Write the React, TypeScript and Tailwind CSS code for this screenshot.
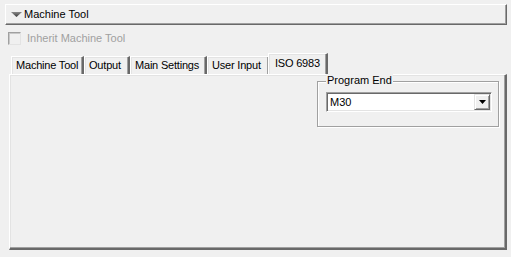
import React from "react";

function Tab({ label, selected, widthClass }: { label: string; selected?: boolean; widthClass: string }) {
  if (selected) {
    return (
      <div
        className={`relative z-10 -mx-[2px] h-[21px] shrink-0 self-end whitespace-nowrap border-l border-t border-white border-r-2 border-r-[#696969] bg-[#f0f0f0] pl-[6px] pt-[3px] text-[11px] leading-[13px] tracking-[-0.2px] text-black shadow-[inset_-1px_0_#a0a0a0,inset_1px_1px_#e3e3e3] ${widthClass}`}
      >
        {label}
      </div>
    );
  }
  return (
    <div
      className={`h-[18px] shrink-0 self-end whitespace-nowrap border-l border-t border-white border-r-2 border-r-[#696969] bg-[#f0f0f0] pl-[4px] pt-[2px] text-[11px] leading-[13px] tracking-[-0.2px] text-black shadow-[inset_-1px_0_#a0a0a0,inset_1px_1px_#e3e3e3] ${widthClass}`}
    >
      {label}
    </div>
  );
}

export default function App() {
  return (
    <div className="flex h-[257px] w-[511px] flex-col bg-[#f0f0f0] pl-[5px] pr-[4px] pt-[4px] font-['Liberation_Sans',Arial,sans-serif] text-black">
      {/* header bar */}
      <div className="flex h-[21px] shrink-0 items-center border-b border-l border-r border-t border-white border-b-[#696969] border-r-[#696969] text-[11px] shadow-[inset_-1px_-1px_#a0a0a0]">
        <svg width="12" height="6" viewBox="0 0 12 6" className="ml-[5px] mt-[1px]">
          <defs>
            <linearGradient id="tri" x1="0" y1="0" x2="0" y2="1">
              <stop offset="0" stopColor="#8a8a8a" />
              <stop offset="1" stopColor="#3a3a3a" />
            </linearGradient>
          </defs>
          <polygon points="0,0 11,0 5.5,5" fill="url(#tri)" />
        </svg>
        <span className="ml-[1px] leading-[13px]">Machine Tool</span>
      </div>

      {/* checkbox */}
      <div className="ml-[3px] mt-[7px] flex h-[13px] shrink-0 items-center">
        <div className="h-[13px] w-[13px] border border-b-[#e3e3e3] border-l-[#a0a0a0] border-r-[#e3e3e3] border-t-[#a0a0a0] bg-[#f0f0f0] shadow-[inset_1px_1px_#c8c8c8]" />
        <span className="ml-[6px] text-[11px] leading-[13px] text-[#a0a0a0]">Inherit Machine Tool</span>
      </div>

      {/* tabs */}
      <div className="ml-[4px] mt-[8px] flex h-[21px] shrink-0 items-end pl-[2px]">
        <Tab label="Machine Tool" widthClass="w-[73px]" />
        <Tab label="Output" widthClass="w-[46px]" />
        <Tab label="Main Settings" widthClass="w-[77px]" />
        <Tab label="User Input" widthClass="w-[63px]" />
        <Tab label="ISO 6983" widthClass="w-[60px]" selected />
      </div>

      {/* panel */}
      <div className="ml-[4px] flex h-[176px] w-[498px] shrink-0 justify-end border-b-2 border-l border-r-2 border-t border-white border-b-[#696969] border-r-[#696969] pr-[6px] pt-[6px] shadow-[inset_-1px_-1px_#a0a0a0,inset_1px_1px_#e3e3e3]">
        <div className="relative h-[46px] w-[182px] border border-[#a0a0a0] pl-[8px] pt-[10px] shadow-[1px_1px_#fff,inset_1px_1px_#fff]">
          <span className="absolute left-[8px] top-[-8px] bg-[#f0f0f0] px-[1px] text-[11px] leading-[13px]">Program End</span>
          <div className="flex h-[20px] w-[166px] items-center border border-b-white border-l-[#a0a0a0] border-r-white border-t-[#a0a0a0] bg-white shadow-[inset_1px_1px_#696969,inset_-1px_-1px_#e3e3e3]">
            <span className="ml-[3px] flex-1 text-[11px] leading-[13px]">M30</span>
            <div className="mr-[1px] flex h-[16px] w-[16px] items-center justify-center border border-b-[#696969] border-l-[#e3e3e3] border-r-[#696969] border-t-[#e3e3e3] bg-[#f0f0f0] shadow-[inset_1px_1px_#fff,inset_-1px_-1px_#a0a0a0]">
              <svg width="7" height="4" viewBox="0 0 7 4">
                <polygon points="0,0 7,0 3.5,4" fill="#000" />
              </svg>
            </div>
          </div>
        </div>
      </div>
    </div>
  );
}
